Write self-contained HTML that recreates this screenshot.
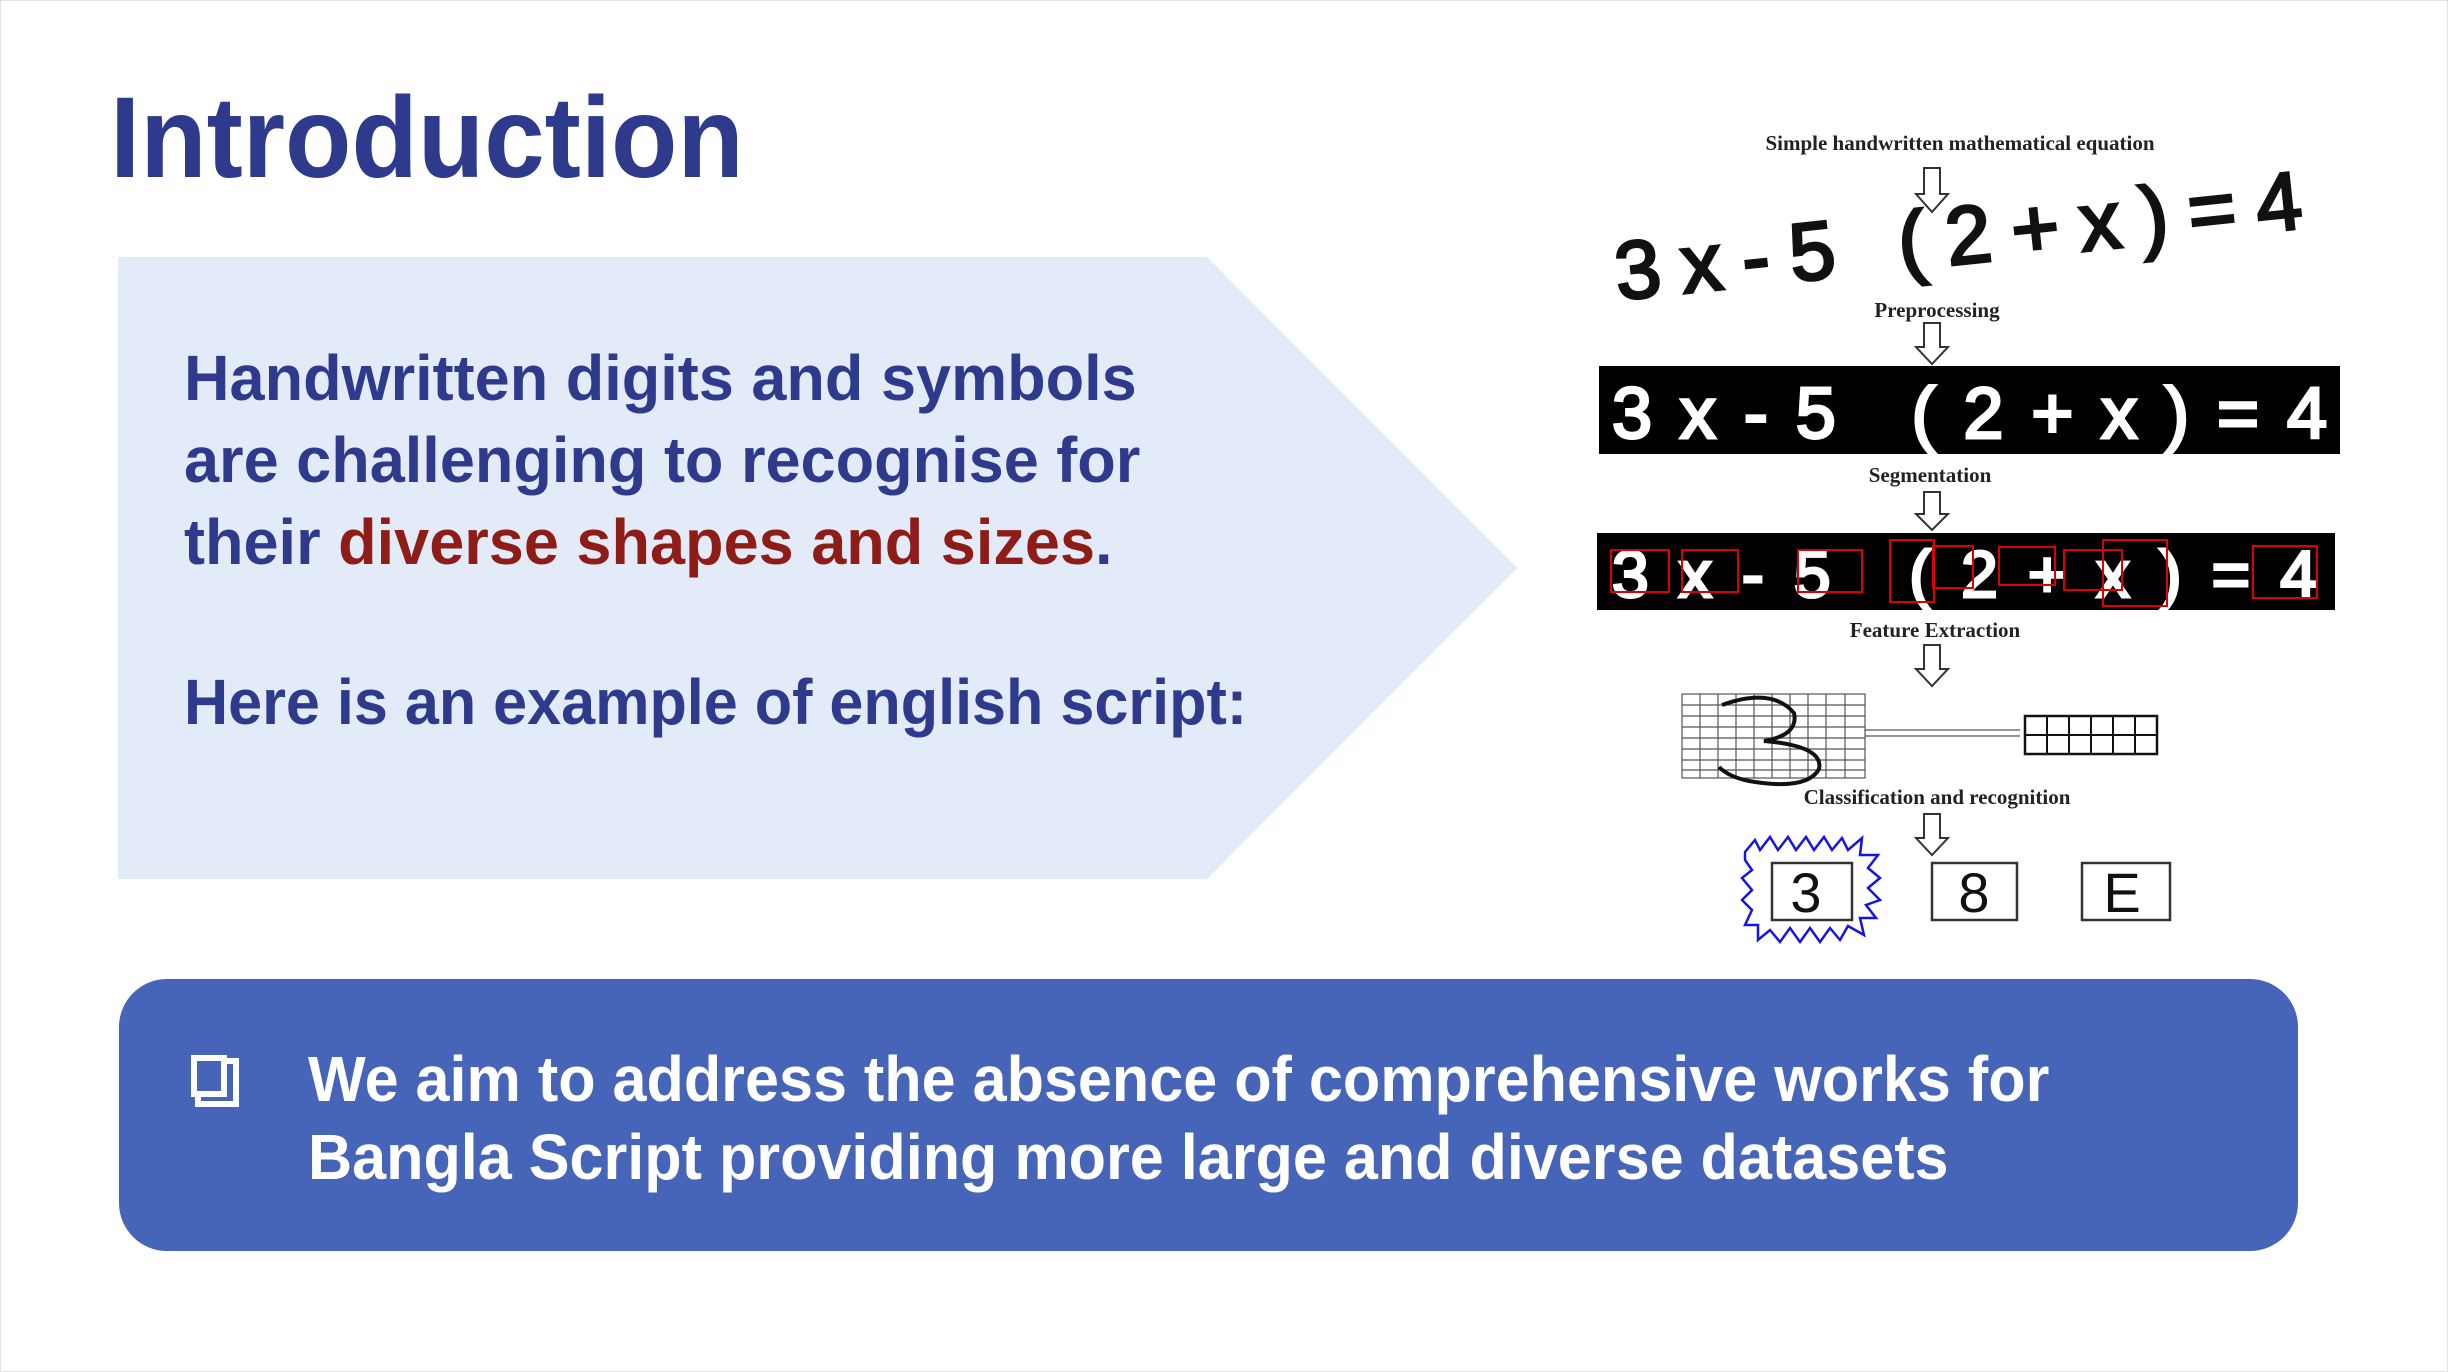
<!DOCTYPE html>
<html><head><meta charset="utf-8"><style>
html,body{margin:0;padding:0;}
body{width:2448px;height:1372px;background:#fff;position:relative;overflow:hidden;font-family:"Liberation Sans",sans-serif;}
.t{position:absolute;white-space:nowrap;font-weight:bold;transform-origin:0 0;}
</style></head><body>
<div style="position:absolute;left:0;top:0;width:2446px;height:1370px;border:1px solid #e4e4e4;"></div>
<div class="t" style="left:110px;top:68px;font-size:115px;color:#2e3a8c;line-height:140px;transform:scaleX(0.945);">Introduction</div>
<svg style="position:absolute;left:0;top:0" width="2448" height="1372">
<polygon points="118,257 1207,257 1517,568 1207,879 118,879" fill="#e3eaf8"/>
<rect x="119" y="979" width="2179" height="272" rx="48" fill="#4765b8"/>
<rect x="194" y="1058" width="30" height="36" fill="none" stroke="#fff" stroke-width="6"/>
<polyline points="227,1061 236,1061 236,1104 198,1104 198,1097" fill="none" stroke="#fff" stroke-width="6"/>
</svg>
<div class="t" style="left:184px;top:337px;font-size:64px;line-height:82px;color:#2e3a8c;transform:scaleX(0.985);">Handwritten digits and symbols<br>are challenging to recognise for<br>their <span style="color:#8e1c17">diverse shapes and sizes</span>.</div>
<div class="t" style="left:184px;top:661px;font-size:64px;line-height:82px;color:#2e3a8c;transform:scaleX(0.955);">Here is an example of english script:</div>
<div class="t" style="left:308px;top:1040px;font-size:64px;line-height:78px;color:#fff;transform:scaleX(0.955);">We aim to address the absence of comprehensive works for<br>Bangla Script providing more large and diverse datasets</div>
<svg style="position:absolute;left:0;top:0" width="2448" height="1372" font-family="Liberation Serif,serif" font-weight="bold">
<g fill="#222" font-size="21" text-anchor="middle">
<text x="1960" y="150">Simple handwritten mathematical equation</text>
<text x="1937" y="317">Preprocessing</text>
<text x="1930" y="482">Segmentation</text>
<text x="1935" y="637">Feature Extraction</text>
<text x="1937" y="804">Classification and recognition</text>
</g>
<g fill="#fff" stroke="#333" stroke-width="2">
<path d="M1924,168 h16 v26 h8 l-16,18 l-16,-18 h8z"/>
<path d="M1924,323 h16 v24 h8 l-16,17 l-16,-17 h8z"/>
<path d="M1924,492 h16 v22 h8 l-16,16 l-16,-16 h8z"/>
<path d="M1924,645 h16 v24 h8 l-16,17 l-16,-17 h8z"/>
<path d="M1924,814 h16 v24 h8 l-16,17 l-16,-17 h8z"/>
</g>
<text x="1618" y="300" font-family="Liberation Sans,sans-serif" font-weight="normal" font-size="82" fill="#111" stroke="#111" stroke-width="3" transform="rotate(-6 1618 300)" textLength="690">3x-5 (2+x)=4</text>
<rect x="1599" y="366" width="741" height="88" fill="#000"/>
<text x="1612" y="438" font-family="Liberation Sans,sans-serif" font-weight="normal" font-size="72" fill="#fff" stroke="#fff" stroke-width="3" textLength="715">3x-5 (2+x)=4</text>
<rect x="1597" y="533" width="738" height="77" fill="#000"/>
<text x="1612" y="597" font-family="Liberation Sans,sans-serif" font-weight="normal" font-size="66" fill="#fff" stroke="#fff" stroke-width="3" textLength="705">3x-5 (2+x)=4</text>
<g fill="none" stroke="#d00" stroke-width="2">
<rect x="1611" y="550" width="58" height="42"/><rect x="1682" y="550" width="56" height="42"/>
<rect x="1798" y="550" width="64" height="42"/><rect x="1890" y="540" width="44" height="62"/>
<rect x="1933" y="546" width="40" height="42"/><rect x="1999" y="547" width="56" height="38"/>
<rect x="2064" y="550" width="58" height="40"/><rect x="2103" y="540" width="64" height="66"/>
<rect x="2253" y="546" width="64" height="52"/>
</g>
<g stroke="#555" stroke-width="1.2">
<rect x="1682" y="694" width="183" height="84" fill="#fff"/>
<path d="M1700,694v84M1718,694v84M1736,694v84M1754,694v84M1772,694v84M1790,694v84M1808,694v84M1826,694v84M1845,694v84M1682,705h183M1682,716h183M1682,727h183M1682,738h183M1682,749h183M1682,760h183M1682,770h183"/>
<path d="M1865,730 h155 M1865,736 h155"/>
<rect x="2025" y="716" width="132" height="38" fill="#fff" stroke="#111" stroke-width="2.5"/>
<path d="M2047,716v38M2069,716v38M2091,716v38M2113,716v38M2135,716v38M2025,735h132" stroke="#111" stroke-width="2"/>
</g>
<path d="M1722,705 q50,-18 72,8 q5,22 -30,28 q60,5 55,28 q-12,22 -70,12 q-20,-4 -30,-14" fill="none" stroke="#111" stroke-width="4"/>
<polygon points="1745,852 1755,840 1760,850 1770,837 1778,850 1788,837 1796,850 1806,837 1814,850 1824,837 1832,850 1842,838 1848,850 1862,838 1860,855 1878,855 1868,868 1880,878 1868,888 1880,900 1866,905 1876,918 1860,918 1864,935 1848,926 1840,940 1830,928 1820,942 1810,928 1800,942 1790,928 1780,942 1770,930 1758,940 1758,925 1745,925 1752,910 1742,900 1752,890 1742,878 1752,870 1745,860" fill="none" stroke="#1515e0" stroke-width="2.5"/>
<g fill="#fff" stroke="#333" stroke-width="2.5">
<rect x="1772" y="863" width="80" height="57"/><rect x="1932" y="863" width="85" height="57"/><rect x="2082" y="863" width="88" height="57"/>
</g>
<g font-family="Liberation Sans,sans-serif" font-weight="normal" font-size="56" fill="#111" text-anchor="middle">
<text x="1806" y="912">3</text><text x="1974" y="912">8</text><text x="2122" y="912">E</text>
</g>
</svg>
</body></html>
